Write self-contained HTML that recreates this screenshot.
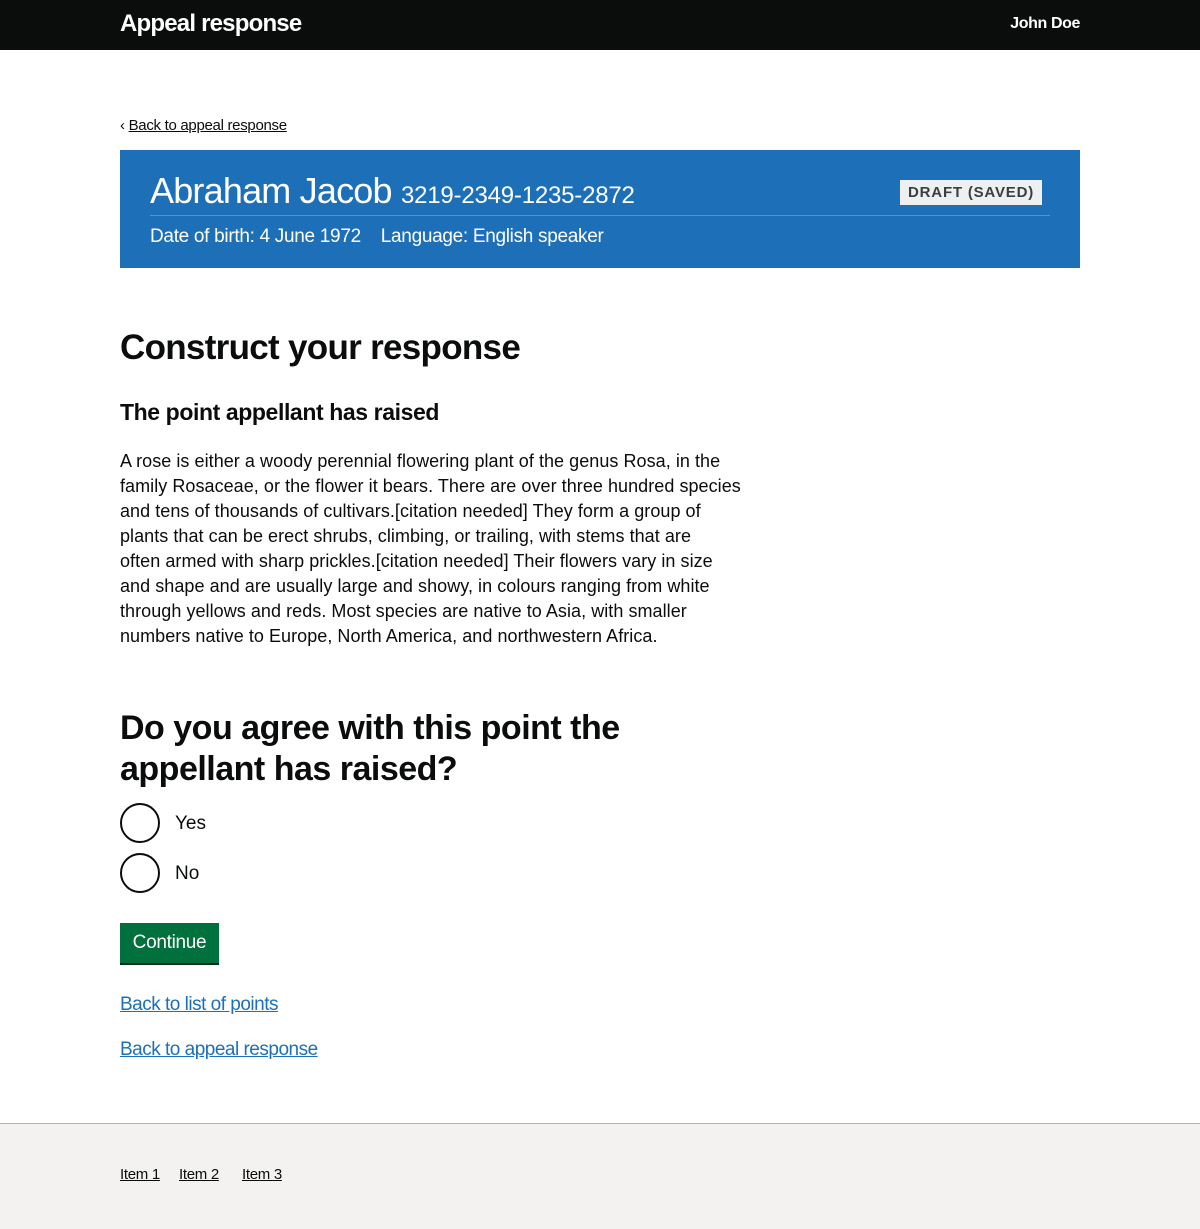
<!DOCTYPE html>
<html><head><meta charset="utf-8"><style>
*{box-sizing:border-box;margin:0;padding:0}
body{width:1200px;height:1229px;font-family:"Liberation Sans",sans-serif;color:#0b0c0c;background:#fff;position:relative}
.hdr{height:50px;background:#0b0c0c;color:#fff;position:relative}
.hdr .t{position:absolute;left:120px;top:10px;font-size:24px;font-weight:bold;letter-spacing:-0.8px}
.hdr .u{position:absolute;right:120px;top:15px;font-size:16px;font-weight:bold;letter-spacing:-0.4px}
.back{position:absolute;left:120px;top:117px;font-size:15px;color:#0b0c0c;letter-spacing:-0.3px}
.back span{text-decoration:underline}
.banner{position:absolute;left:120px;top:150px;width:960px;height:118px;background:#1d70b8;color:#fff}
.banner .n{position:absolute;left:30px;top:20px;font-size:36px;letter-spacing:-0.8px}
.banner .n small{font-size:24px;letter-spacing:-0.2px}
.banner .line{position:absolute;left:30px;right:30px;top:65px;border-top:1px solid #5694ca}
.banner .m{position:absolute;left:30px;top:76px;font-size:19px;letter-spacing:-0.3px}
.tag{position:absolute;right:38px;top:30px;background:#eeefef;color:#383f43;font-weight:bold;font-size:15px;padding:4px 8px;letter-spacing:0.8px}
h1{position:absolute;left:120px;top:328px;font-size:35px;letter-spacing:-0.7px}
h2{position:absolute;left:120px;top:399px;font-size:23px;letter-spacing:-0.4px}
p.b{position:absolute;left:120px;top:449px;font-size:18px;line-height:25px;width:700px;letter-spacing:0.05px}
h3{position:absolute;left:120px;top:708px;font-size:34px;line-height:41px;letter-spacing:-0.5px}
.r{position:absolute;left:120px;width:40px;height:40px;border:2px solid #0b0c0c;border-radius:50%}
.rl{position:absolute;left:175px;font-size:19px}
.btn{position:absolute;left:120px;top:923px;width:99px;height:40px;background:#00703c;box-shadow:0 2px 0 #002d18;color:#fff;font-size:19px;padding-top:9px;text-align:center;letter-spacing:-0.3px}
.lk{position:absolute;left:120px;font-size:19px;color:#1d70b8;text-decoration:underline;letter-spacing:-0.5px}
.ftr{position:absolute;left:0;top:1123px;width:1200px;height:106px;background:#f3f2f1;border-top:1px solid #b1b4b6}
.ftr a{position:absolute;top:42px;font-size:15px;color:#0b0c0c;text-decoration:underline;letter-spacing:-0.3px}
</style></head><body>
<div class="hdr"><div class="t">Appeal response</div><div class="u">John Doe</div></div>
<div class="back">‹ <span>Back to appeal response</span></div>
<div class="banner"><div class="n">Abraham Jacob <small>3219-2349-1235-2872</small></div><div class="tag">DRAFT (SAVED)</div><div class="line"></div><div class="m">Date of birth: 4 June 1972 &nbsp;&nbsp; Language: English speaker</div></div>
<h1>Construct your response</h1>
<h2>The point appellant has raised</h2>
<p class="b">A rose is either a woody perennial flowering plant of the genus Rosa, in the<br>family Rosaceae, or the flower it bears. There are over three hundred species<br>and tens of thousands of cultivars.[citation needed] They form a group of<br>plants that can be erect shrubs, climbing, or trailing, with stems that are<br>often armed with sharp prickles.[citation needed] Their flowers vary in size<br>and shape and are usually large and showy, in colours ranging from white<br>through yellows and reds. Most species are native to Asia, with smaller<br>numbers native to Europe, North America, and northwestern Africa.</p>
<h3>Do you agree with this point the<br>appellant has raised?</h3>
<div class="r" style="top:803px"></div><div class="rl" style="top:813px">Yes</div>
<div class="r" style="top:853px"></div><div class="rl" style="top:863px">No</div>
<div class="btn">Continue</div>
<a class="lk" style="top:994px">Back to list of points</a>
<a class="lk" style="top:1039px">Back to appeal response</a>
<div class="ftr"><a style="left:120px">Item 1</a><a style="left:179px">Item 2</a><a style="left:242px">Item 3</a></div>
</body></html>
